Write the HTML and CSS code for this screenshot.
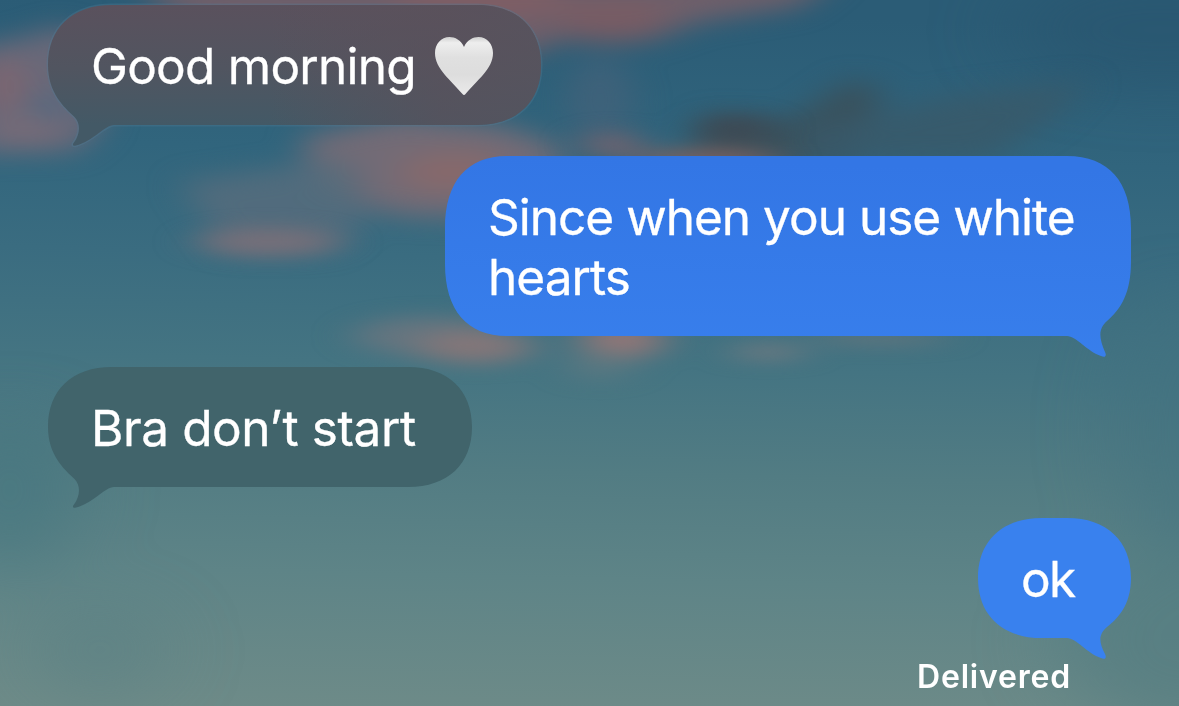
FILE: index.html
```html
<!DOCTYPE html>
<html lang="en">
<head>
    <meta charset="UTF-8">
    <title>Messages</title>
    <link rel="stylesheet" href="styles.css">
</head>
<body>
    <!-- sunset wallpaper -->
    <svg class="wallpaper" viewBox="0 0 1179 706" aria-hidden="true">
        <defs>
            <linearGradient id="sky" x1="0.04" y1="0" x2="0" y2="1">
                <stop offset="0" stop-color="#2b5c76"/>
                <stop offset="0.2" stop-color="#31657d"/>
                <stop offset="0.35" stop-color="#3a6c80"/>
                <stop offset="0.5" stop-color="#447482"/>
                <stop offset="0.65" stop-color="#527c83"/>
                <stop offset="0.8" stop-color="#5e8487"/>
                <stop offset="1" stop-color="#6e8b88"/>
            </linearGradient>
            <filter id="soft" x="-50%" y="-100%" width="200%" height="300%" color-interpolation-filters="sRGB"><feGaussianBlur stdDeviation="17 12"/></filter>
            <filter id="wide" x="-50%" y="-100%" width="200%" height="300%" color-interpolation-filters="sRGB"><feGaussianBlur stdDeviation="40 28"/></filter>
            <filter id="thin" x="-50%" y="-200%" width="200%" height="500%" color-interpolation-filters="sRGB"><feGaussianBlur stdDeviation="20 9"/></filter>
        </defs>
        <rect width="1179" height="706" fill="url(#sky)"/>
        <g filter="url(#wide)">
            <ellipse cx="1160" cy="30" rx="150" ry="60" fill="#27546e" opacity=".5"/>
            <ellipse cx="1190" cy="430" rx="70" ry="140" fill="#41727f" opacity=".5"/>
            <ellipse cx="1190" cy="640" rx="130" ry="90" fill="#527c80" opacity=".6"/>
            <ellipse cx="10" cy="490" rx="60" ry="80" fill="#42747f" opacity=".6"/>
            <ellipse cx="100" cy="650" rx="60" ry="50" fill="#557e83" opacity=".4"/>
        </g>
        <g filter="url(#soft)">
            <path d="M-30 48 30 36 60 25 110 50 100 130 75 152-30 154Z" fill="#6f6979" opacity=".9"/>
            <ellipse cx="0" cy="85" rx="30" ry="28" fill="#80656f" opacity=".8"/>
            <ellipse cx="26" cy="132" rx="36" ry="15" fill="#7a6b77" opacity=".8"/>
            <ellipse cx="48" cy="106" rx="16" ry="9" fill="#456985"/>
            <path d="M130-20 840-25 800 6 700 22 650 40 560 40 520 60 360 60 180 20Z" fill="#6f5f6a"/>
            <ellipse cx="480" cy="-2" rx="90" ry="16" fill="#8a5e62" opacity=".7"/>
            <ellipse cx="612" cy="22" rx="56" ry="22" fill="#7c5b62" opacity=".7"/>
            <ellipse cx="600" cy="100" rx="34" ry="44" fill="#4b627a" opacity=".55"/>
            <path d="M300 138 400 116 500 125 560 146 560 220 400 216 320 190Z" fill="#736b76"/>
            <ellipse cx="455" cy="172" rx="55" ry="20" fill="#8c6969" opacity=".8"/>
            <path d="M180 182 350 158 370 215 330 250 225 250Z" fill="#566c7d" opacity=".85"/>
            <path d="M705 116 790 120 850 80 885 90 860 135 850 170 690 165Z" fill="#3a505b" opacity=".95"/>
            <path d="M800 130 960 95 1090 80 1050 120 990 160 800 165Z" fill="#38596a" opacity=".85"/>
        </g>
        <g filter="url(#thin)">
            <ellipse cx="268" cy="242" rx="72" ry="14" fill="#7b7079" opacity=".9"/>
            <ellipse cx="430" cy="336" rx="75" ry="20" fill="#6b767f" opacity=".85"/>
            <ellipse cx="476" cy="347" rx="58" ry="17" fill="#877779" opacity=".9"/>
            <ellipse cx="622" cy="340" rx="42" ry="19" fill="#8f7677"/>
            <ellipse cx="600" cy="365" rx="34" ry="16" fill="#667a81" opacity=".6"/>
            <ellipse cx="768" cy="352" rx="38" ry="7" fill="#7b7b80" opacity=".9"/>
            <ellipse cx="880" cy="338" rx="70" ry="6" fill="#72777c" opacity=".8"/>
            <ellipse cx="612" cy="145" rx="30" ry="14" fill="#74636e" opacity=".9"/>
            <ellipse cx="705" cy="160" rx="75" ry="10" fill="#80615f"/>
            <ellipse cx="735" cy="128" rx="38" ry="13" fill="#40464f" opacity=".75"/>
        </g>
    </svg>

    <main class="thread">
        <div class="bubble received morning">
            <svg class="shape" viewBox="0 0 493 142" aria-hidden="true">
                <defs>
                    <linearGradient id="dusk" x1="0" y1="0" x2="0" y2="1">
                        <stop offset="0" stop-color="#5a515d"/>
                        <stop offset="0.45" stop-color="#515560"/>
                        <stop offset="0.85" stop-color="#435966"/>
                    </linearGradient>
                    <linearGradient id="duskRight" x1="0" y1="0" x2="1" y2="0">
                        <stop offset="0.45" stop-color="#5d515a" stop-opacity="0"/>
                        <stop offset="0.8" stop-color="#5a515b" stop-opacity="0.7"/>
                        <stop offset="1" stop-color="#58535d" stop-opacity="0.75"/>
                    </linearGradient>
                    <path id="morningShape" d="M64 0H429C469 0 493 23 493 60S469 120 429 120H66C57 120 44 137 28 140.500C25 141.500 24 139.500 26 137.500C32 129 33 119 26.500 112C16 102 0 88 0 60C0 23 24 0 64 0Z"/>
                </defs>
                <use href="#morningShape" class="edge"/>
                <use href="#morningShape" fill="url(#dusk)"/>
                <use href="#morningShape" fill="url(#duskRight)"/>
            </svg>
            <span class="text">Good morning</span>
            <svg class="heart" viewBox="0 0 58 58" role="img" aria-label="white heart">
                <defs>
                    <linearGradient id="heartFill" x1="0" y1="0" x2="0" y2="1">
                        <stop offset="0" stop-color="#d0d0d0"/>
                        <stop offset="0.1" stop-color="#eeeeee"/>
                        <stop offset="0.35" stop-color="#e0e0e0"/>
                        <stop offset="0.65" stop-color="#dddddd"/>
                        <stop offset="1" stop-color="#eaeaea"/>
                    </linearGradient>
                </defs>
                <path d="M29 10C26 3 20 0 14.500 0C6 0 0 7 0 16C0 32 16 43 27.500 57Q29 59 30.500 57C42 43 58 32 58 16C58 7 52 0 43.500 0C38 0 32 3 29 10Z" fill="url(#heartFill)"/>
            </svg>
        </div>

        <div class="bubble sent question">
            <svg class="shape" viewBox="0 0 686 202" aria-hidden="true">
                <defs>
                    <linearGradient id="blue" x1="0" y1="1" x2="0.08" y2="0">
                        <stop offset="0" stop-color="#387fec"/>
                        <stop offset="1" stop-color="#3376e5"/>
                    </linearGradient>
                </defs>
                <path fill="url(#blue)" d="M62 0H622C664 0 686 26 686 72V105C686 137 676 153 662 165C653 173 654 182 660 196C662 200 660 202 656 200C643 196 631 180 622 180H62C22 180 0 154 0 108V72C0 26 22 0 62 0Z"/>
            </svg>
            <span class="text">Since when you use white<br>hearts</span>
        </div>

        <div class="bubble received start">
            <svg class="shape" viewBox="0 0 424 142" aria-hidden="true">
                <path fill="#41646b" d="M64 0H360C400 0 424 23 424 60S400 120 360 120H66C57 120 44 137 28 140.500C25 141.500 24 139.500 26 137.500C32 129 33 119 26.500 112C16 102 0 88 0 60C0 23 24 0 64 0Z"/>
            </svg>
            <span class="text">Bra don’t start</span>
        </div>

        <div class="bubble sent ok">
            <svg class="shape" viewBox="0 0 153 142" aria-hidden="true">
                <path fill="#3981ee" d="M64 0H89C129 0 153 23 153 60C153 88 139 101 129 109C120 117 121 124 127 136C129 140 127 142 123 140C110 136 98 120 89 120H64C24 120 0 97 0 60S24 0 64 0Z"/>
            </svg>
            <span class="text">ok</span>
        </div>

        <div class="status">Delivered</div>
    </main>
</body>
</html>
```

FILE: styles.css
```css
* { box-sizing: border-box; }
body { margin: 0; height: 706px; overflow: hidden; position: relative; background: #427482; color: #fff; font-family: Inter, "Liberation Sans", sans-serif; }
.wallpaper { position: absolute; top: 0; left: 0; width: 1179px; height: 706px; }
.thread { position: relative; display: flex; flex-direction: column; gap: 31px; padding: 5px 48px 0; }
.bubble { position: relative; display: flex; align-items: flex-start; height: 120px; padding: 31px 43px 29px; font-size: 49.5px; line-height: 60px; white-space: nowrap; }
.received { align-self: flex-start; }
.sent { align-self: flex-end; }
.shape { position: absolute; top: 0; left: 0; width: 100%; overflow: visible; }
.edge { fill: none; stroke: #4f7c94; stroke-opacity: 0.35; stroke-width: 3; }
.text { position: relative; -webkit-text-stroke: 0.3px #fff; }
.morning { width: 493px; letter-spacing: -0.75px; }
.question { width: 686px; height: 180px; letter-spacing: -0.98px; }
.start { width: 424px; letter-spacing: -0.4px; }
.ok { width: 153px; letter-spacing: -1.8px; }
.heart { position: relative; width: 58px; height: 58px; margin: 1px 5px 0 auto; }
.status { align-self: flex-end; margin: -7px 60px 0 0; font-size: 32px; font-weight: 600; line-height: 30px; letter-spacing: 0.8px; }
```
